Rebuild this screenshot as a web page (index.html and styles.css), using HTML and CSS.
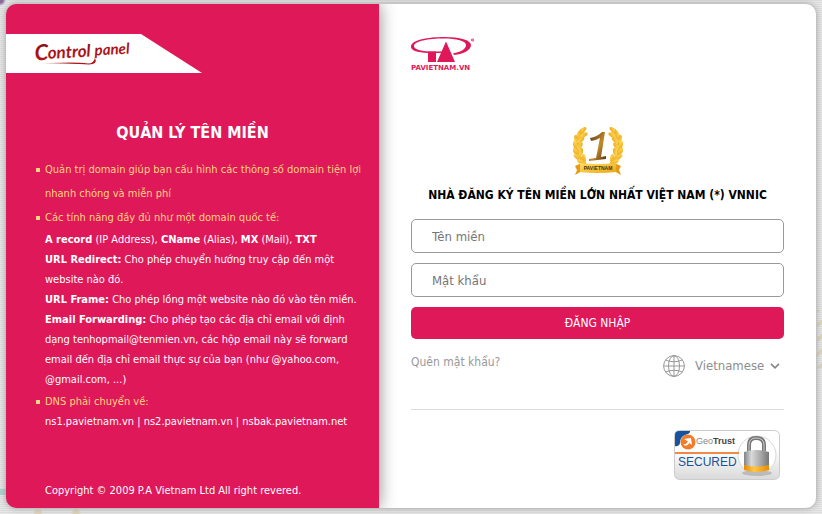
FILE: index.html
```html
<!DOCTYPE html>
<html lang="vi">
<head>
<meta charset="utf-8">
<meta name="viewport" content="width=device-width, initial-scale=1">
<title>P.A Vietnam - Control panel</title>
<link rel="stylesheet" href="styles.css">
</head>
<body>
<div class="card">
  <section class="info">
    <header class="banner">
      <svg class="wordmark" viewBox="0 0 100 28" role="img" aria-label="Control panel">
        <defs>
          <linearGradient id="ink" x1="0" y1="0" x2="0" y2="1"><stop offset="0" stop-color="#6d1018"/><stop offset=".6" stop-color="#b01218"/></linearGradient>
          <linearGradient id="stroke" x1="0" y1="0" x2="1" y2="0"><stop offset="0" stop-color="#b01218" stop-opacity="0"/><stop offset=".6" stop-color="#b01218"/></linearGradient>
        </defs>
        <g class="script" fill="url(#ink)" transform="rotate(-3 2 20)">
          <text x="1" y="21" class="script-cap">C</text>
          <text x="14" y="20" class="script-big">ontrol</text>
          <text x="61" y="19" class="script-small">panel</text>
        </g>
        <path d="M6 24 Q40 22 54 24 Q60 24 61 18 Q64 25 55 25 Q38 24 6 24Z" fill="url(#stroke)"/>
      </svg>
    </header>
    <h1>QUẢN LÝ TÊN MIỀN</h1>
    <ul class="features">
      <li>Quản trị domain giúp bạn cấu hình các thông số domain tiện lợi<br>nhanh chóng và miễn phí</li>
      <li>Các tính năng đầy đủ như một domain quốc tế:
        <div class="detail">
          <p><b>A record</b> (IP Address), <b>CName</b> (Alias), <b>MX</b> (Mail), <b>TXT</b></p>
          <p><b>URL Redirect:</b> Cho phép chuyển hướng truy cập đến một<br>website nào đó.</p>
          <p><b>URL Frame:</b> Cho phép lồng một website nào đó vào tên miền.</p>
          <p><b>Email Forwarding:</b> Cho phép tạo các địa chỉ email với định<br>dạng tenhopmail@tenmien.vn, các hộp email này sẽ forward<br>email đến địa chỉ email thực sự của bạn (như @yahoo.com,<br>@gmail.com, ...)</p>
        </div>
      </li>
      <li>DNS phải chuyển về:
        <p class="servers">ns1.pavietnam.vn | ns2.pavietnam.vn | nsbak.pavietnam.net</p>
      </li>
    </ul>
    <footer>Copyright © 2009 P.A Vietnam Ltd All right revered.</footer>
  </section>

  <main class="login">
    <svg class="logo" viewBox="0 0 66 36" role="img" aria-label="PAVIETNAM.VN">
      <g fill="#df1859">
        <path fill-rule="evenodd" d="M0 10C1 4 17 1 33 1C49 1 60 4 60 9C60 14 53 18 43 19L42 17.500C50 16 55 13 55 9C55 5 46 2.500 32 2.500C18 2.500 3 5 3 10C3 14 12 15.500 22 15.500H33V17H22C8 17-1 15 0 10Z"/>
        <path d="M17 15.500H25V26H17Z"/>
        <path d="M35 5.500L44 26H26Z"/>
      </g>
      <circle cx="61.500" cy="4" r="1.200" fill="#f0a0bc" stroke="#df1859" stroke-width=".6"/>
      <text x="0" y="34" class="logo-text" fill="#df1859">PAVIETNAM.VN</text>
    </svg>

    <svg class="award" viewBox="0 0 50 48" role="img" aria-label="Số 1">
      <defs>
        <linearGradient id="gold" x1="0" y1="0" x2="1" y2="1"><stop offset="0" stop-color="#ffdf63"/><stop offset="1" stop-color="#eca516"/></linearGradient>
        <linearGradient id="bronze" x1="0" y1="0" x2="1" y2="1"><stop offset="0" stop-color="#503018"/><stop offset=".55" stop-color="#c48a28"/><stop offset="1" stop-color="#503018"/></linearGradient>
        <g id="branch">
          <path d="M10 3C1 13 1 28 12 38" fill="none" stroke="#f5b62c" stroke-width="5"/>
          <g fill="url(#gold)">
            <ellipse cx="10" cy="3" rx="4" ry="2" transform="rotate(-38 10 3)"/>
            <ellipse cx="6" cy="7" rx="4" ry="2" transform="rotate(-65 6 7)"/>
            <ellipse cx="11" cy="8" rx="4" ry="2" transform="rotate(-32 11 8)"/>
            <ellipse cx="3" cy="12" rx="4" ry="2" transform="rotate(-100 3 12)"/>
            <ellipse cx="8" cy="13" rx="4" ry="2" transform="rotate(-45 8 13)"/>
            <ellipse cx="2" cy="18" rx="4" ry="2" transform="rotate(65 2 18)"/>
            <ellipse cx="7" cy="19" rx="4" ry="2" transform="rotate(-60 7 19)"/>
            <ellipse cx="2" cy="24" rx="4" ry="2" transform="rotate(52 2 24)"/>
            <ellipse cx="8" cy="25" rx="4" ry="2" transform="rotate(-80 8 25)"/>
            <ellipse cx="4" cy="30" rx="4" ry="2" transform="rotate(38 4 30)"/>
            <ellipse cx="11" cy="31" rx="4" ry="2" transform="rotate(80 11 31)"/>
            <ellipse cx="8" cy="35" rx="4" ry="2" transform="rotate(25 8 35)"/>
          </g>
        </g>
      </defs>
      <use href="#branch"/>
      <use href="#branch" transform="matrix(-1 0 0 1 50 0)"/>
      <path d="M17 11Q24 10 29 5L32 5L28 30L33 29V32L16 34V32L23 31L27 11Q22 14 18 14Z" fill="url(#bronze)"/>
      <path d="M2 39L9 36V44L2 48L4 43ZM48 39L41 36V44L48 48L46 43Z" fill="#e79a15"/>
      <path d="M7 36Q25 38 43 36V45Q25 47 7 45Z" fill="url(#gold)"/>
      <text x="25" y="43" text-anchor="middle" class="award-text">PAVIETNAM</text>
    </svg>

    <h2>NHÀ ĐĂNG KÝ TÊN MIỀN LỚN NHẤT VIỆT NAM (*) VNNIC</h2>
    <form class="fields">
      <input type="text" placeholder="Tên miền" aria-label="Tên miền">
      <input type="password" placeholder="Mật khẩu" aria-label="Mật khẩu">
      <button type="button">ĐĂNG NHẬP</button>
    </form>
    <div class="options">
      <a href="#">Quên mật khẩu?</a>
      <div class="language">
        <svg class="globe" viewBox="0 0 22 22" fill="none" stroke="#8e8e8e" stroke-width=".9" aria-hidden="true">
          <circle cx="11" cy="11" r="10.400"/><ellipse cx="11" cy="11" rx="5.500" ry="10.400"/>
          <path d="M11 .5V21.500M.5 11H21.500M2.500 5Q11 8.500 19.500 5M2.500 17Q11 13.500 19.500 17"/>
        </svg>
        <select aria-label="Ngôn ngữ"><option>Vietnamese</option></select>
        <svg class="chevron" viewBox="0 0 10 6" fill="none" stroke="#888" stroke-width="1.700" aria-hidden="true"><path d="M1 .8L5 4.800L9 .8"/></svg>
      </div>
    </div>
    <svg class="seal" viewBox="0 0 106 51" role="img" aria-label="GeoTrust Secured">
      <defs>
        <linearGradient id="plate" x1="0" y1="0" x2="0" y2="1"><stop offset=".4" stop-color="#fff"/><stop offset="1" stop-color="#d9d9d9"/></linearGradient>
        <linearGradient id="steel"><stop offset="0" stop-color="#808386"/><stop offset=".3" stop-color="#d8d9da"/><stop offset=".65" stop-color="#aaa"/><stop offset="1" stop-color="#777"/></linearGradient>
        <linearGradient id="brass"><stop offset="0" stop-color="#e58b00"/><stop offset=".4" stop-color="#ffc845"/><stop offset="1" stop-color="#e88b00"/></linearGradient>
        <clipPath id="plate-clip"><rect x="1" y="1" width="104" height="48" rx="4"/></clipPath>
      </defs>
      <rect x=".5" y=".5" width="105" height="49" rx="5" fill="url(#plate)" stroke="#ccc"/>
      <g clip-path="url(#plate-clip)">
        <path d="M0 0H16Q17 4 11 5Q6 7 6 13Q5 17 0 16Z" fill="#17539c"/>
        <circle cx="83" cy="25" r="19" fill="#fff" stroke="#d5d5d5"/>
        <path d="M0 22H65V24H0Z" fill="#f28a45"/>
      </g>
      <circle cx="14" cy="12" r="7.500" fill="#f47b28"/>
      <path d="M10 9L17 8L18 15L15.500 13Q12 18 9 14Q12 15 14 11.500Z" fill="#fff"/>
      <text x="22" y="14" class="seal-brand"><tspan fill="#888">Geo</tspan><tspan class="seal-strong">Trust</tspan></text>
      <text x="4" y="36" class="seal-word">SECURED</text>
      <ellipse cx="83" cy="43" rx="15" ry="3" fill="#bbb"/>
      <path d="M75 21V15Q75 8 82 8Q90 8 90 15V21" fill="none" stroke="#777" stroke-width="4"/>
      <path d="M75 21V15Q75 8 82 8Q90 8 90 15V21" fill="none" stroke="#ccc"/>
      <path d="M70 22Q82 18 95 22V37H70Z" fill="url(#steel)"/>
      <path d="M70 35Q82 38 95 35V40Q82 44 70 40Z" fill="url(#brass)"/>
    </svg>
  </main>
</div>
</body>
</html>
```
FILE: styles.css
```css
* { box-sizing: border-box; }

body {
  margin: 0;
  padding: 4px 6px 6px;
  background:
    radial-gradient(circle at 0 0, #8d6a9c 3px, transparent 6px),
    linear-gradient(#a9d0ca, #a9d0ca) 0 489px / 6px 6px no-repeat,
    radial-gradient(circle, #ddd2bb 3px, transparent 5px) 32px 509px / 12px 8px no-repeat,
    radial-gradient(circle, #ddd2bb 3px, transparent 5px) 70px 509px / 12px 8px no-repeat,
    repeating-linear-gradient(-35deg, #ddd3b8 0 4px, transparent 4px 12px) 100% 310px / 5px 58px no-repeat,
    repeating-linear-gradient(#dcdcdc 0 1px, #e8e8e8 1px 2px);
  color: #000;
  font: 12px/20px "DejaVu Sans Condensed", "DejaVu Sans", sans-serif;
}

h1, h2, p, ul { margin: 0; padding: 0; }

.card {
  display: grid;
  grid-template-columns: minmax(0, 373fr) minmax(0, 437fr);
  overflow: hidden;
  border-radius: 10px;
  background: #fff;
  box-shadow: 0 0 6px #999;
}

.info {
  display: flex;
  flex-direction: column;
  padding: 30px 0 7px;
  background: #df1859;
  color: #fff;
  font-size: 11px;
  box-shadow: 0 0 16px #888;
}

.banner {
  width: 196px;
  padding: 5px 28px;
  background: #fff;
  clip-path: polygon(0 0, 135px 0, 100% 100%, 0 100%);
}

.wordmark { display: block; width: 100px; height: 29px; overflow: visible; }
.script { font-family: "Lato", sans-serif; font-style: italic; font-weight: bold; }
.script-cap { font-size: 22px; }
.script-big { font-size: 17px; }
.script-small { font-size: 15px; }

h1 {
  margin: 48px 0 13px;
  font-size: 16px;
  line-height: 24px;
  text-align: center;
}

.features {
  padding: 0 24px 0 39px;
  list-style: none;
  white-space: nowrap;
}

.features li { color: #ffd57e; line-height: 24px; }

.features li::before {
  content: "";
  float: left;
  width: 4px;
  height: 4px;
  margin: 10px 0 0 -9px;
  background: #ffd57e;
}

.detail, .servers { color: #fff; line-height: 20px; }
.servers { line-height: 16px; }
footer { margin-top: auto; padding-left: 39px; }

.login {
  display: flex;
  flex-direction: column;
  padding: 32px 32px 27px;
}

.logo { width: 66px; height: 36px; }
.logo-text { font: bold 7px "DejaVu Sans", sans-serif; }
.award { align-self: center; width: 50px; height: 48px; margin-top: 55px; }
.award-text { font: bold 5px "Liberation Sans", sans-serif; fill: #4b3410; }

h2 {
  margin: 10px 0 14px;
  font-size: 12px;
  line-height: 20px;
  text-align: center;
  white-space: nowrap;
}

.fields { display: flex; flex-direction: column; gap: 10px; }

input {
  height: 34px;
  padding: 0 20px;
  border: 1px solid #999;
  border-radius: 5px;
  background: #fff;
  font: inherit;
  font-size: 13px;
}

input::placeholder { color: #757575; }

button {
  height: 32px;
  border: 0;
  border-radius: 5px;
  background: #df1859;
  color: #fff;
  font: inherit;
}

.options {
  display: flex;
  justify-content: space-between;
  align-items: flex-start;
  padding: 13px 0 31px;
  border-bottom: 1px solid #ddd;
}

a { color: #999; text-decoration: none; }

.language {
  display: flex;
  align-items: center;
  padding: 2px 4px 0 0;
}

.globe { width: 22px; height: 24px; margin-right: 10px; }

select {
  width: 75px;
  padding: 0;
  border: 0;
  appearance: none;
  background: none;
  color: #8e8e8e;
  font: inherit;
  font-size: 13px;
}

.chevron { width: 10px; height: 6px; }
.seal { align-self: flex-end; width: 106px; height: 51px; margin: 20px 4px 0 0; }
.seal-brand { font: 9px "Liberation Sans", sans-serif; }
.seal-strong { font-weight: bold; fill: #444; }
.seal-word { font: 12px "Liberation Sans", sans-serif; fill: #17539c; }
```
